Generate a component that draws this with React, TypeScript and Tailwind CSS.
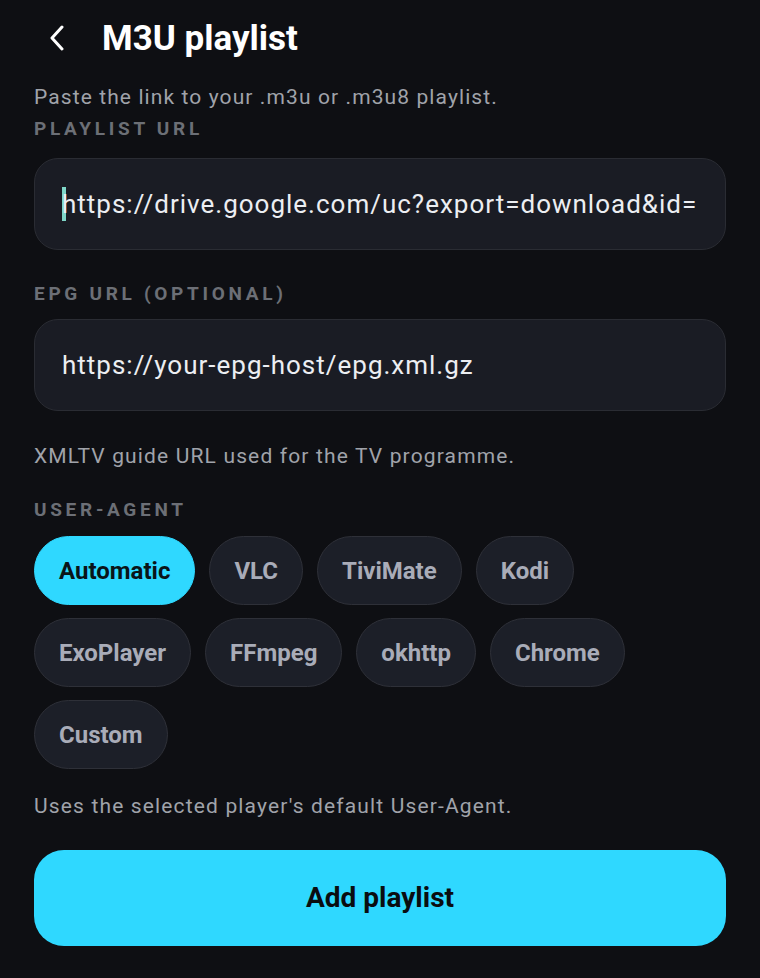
import { useState } from "react";

const AGENTS = [
  "Automatic",
  "VLC",
  "TiviMate",
  "Kodi",
  "ExoPlayer",
  "FFmpeg",
  "okhttp",
  "Chrome",
  "Custom",
];

function FieldLabel({ children }: { children: React.ReactNode }) {
  return (
    <p className="text-[19px] font-bold uppercase leading-[22px] tracking-[3.7px] text-[#6c6f76]">
      {children}
    </p>
  );
}

function TextField({ value, caret }: { value: string; caret?: boolean }) {
  return (
    <div className="flex h-[92px] items-center overflow-hidden rounded-[24px] border border-[#2a2c33] bg-[#1a1c24] px-[27px]">
      {caret && <span className="mr-[-4px] h-[34px] w-[4px] shrink-0 bg-[#7fd6c8]" />}
      <span className="whitespace-nowrap text-[26px] tracking-[1px] text-[#eceef2]">{value}</span>
    </div>
  );
}

export default function App() {
  const [agent, setAgent] = useState("Automatic");

  return (
    <div
      className="min-h-[978px] w-full bg-[#0e0f13] px-[34px]"
      style={{ fontFamily: "Roboto, 'Noto Sans', sans-serif" }}
    >
      {/* header */}
      <header className="flex h-[76px] items-center">
        <button className="ml-[13px] flex h-[30px] w-[22px] items-center text-white">
          <svg width="20" height="26" viewBox="0 0 20 26" fill="none">
            <path
              d="M15 2 L5 13 L15 24"
              stroke="currentColor"
              strokeWidth="3"
              strokeLinecap="round"
              strokeLinejoin="round"
            />
          </svg>
        </button>
        <h1 className="ml-[33px] text-[35px] font-bold leading-none text-white">M3U playlist</h1>
      </header>

      <p className="mt-[8px] text-[21px] leading-[26px] tracking-[1.1px] text-[#a0a3aa]">
        Paste the link to your .m3u or .m3u8 playlist.
      </p>

      <div className="mt-[8px]">
        <FieldLabel>Playlist URL</FieldLabel>
      </div>
      <div className="mt-[18px]">
        <TextField value="https://drive.google.com/uc?export=download&id=" caret />
      </div>

      <div className="mt-[33px]">
        <FieldLabel>EPG URL (optional)</FieldLabel>
      </div>
      <div className="mt-[14px]">
        <TextField value="https://your-epg-host/epg.xml.gz" />
      </div>

      <p className="mt-[32px] text-[21px] leading-[26px] tracking-[1.15px] text-[#a0a3aa]">
        XMLTV guide URL used for the TV programme.
      </p>

      <div className="mt-[30px]">
        <FieldLabel>User-Agent</FieldLabel>
      </div>

      <div className="mt-[15px] flex flex-wrap gap-x-[14px] gap-y-[13px]">
        {AGENTS.map((a) => {
          const on = a === agent;
          return (
            <button
              key={a}
              onClick={() => setAgent(a)}
              className={
                on
                  ? "flex h-[69px] items-center rounded-full border border-[#2fd8ff] bg-[#2fd8ff] px-[24px] text-[24px] font-bold text-[#0a1418]"
                  : "flex h-[69px] items-center rounded-full border border-[#2e3038] bg-[#1c1f28] px-[24px] text-[24px] font-bold text-[#a9acb8]"
              }
            >
              {a}
            </button>
          );
        })}
      </div>

      <p className="mt-[24px] text-[21px] leading-[26px] tracking-[1.15px] text-[#a0a3aa]">
        Uses the selected player's default User-Agent.
      </p>

      <button className="mt-[31px] flex h-[96px] w-full items-center justify-center rounded-[30px] bg-[#2fd8ff] text-[28px] font-bold text-[#0a0d10]">
        Add playlist
      </button>
    </div>
  );
}
